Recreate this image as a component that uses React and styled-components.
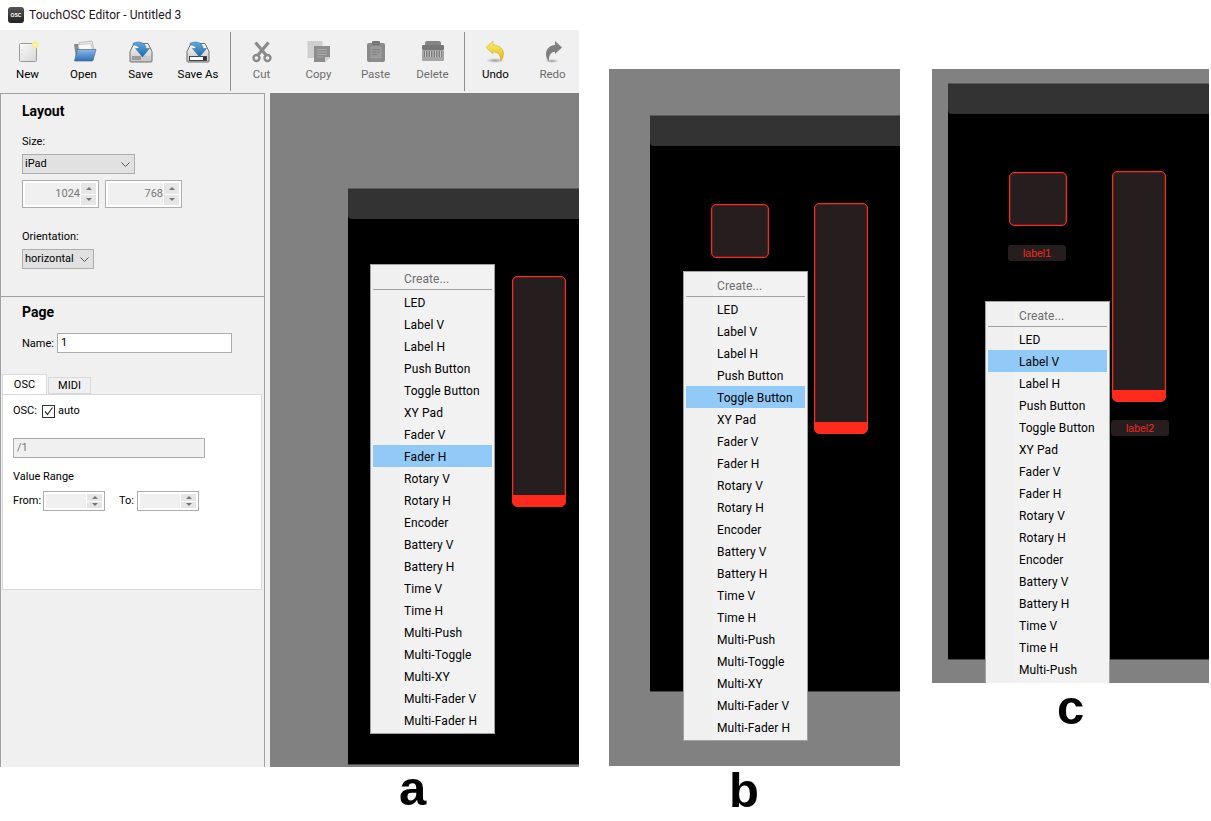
import React from "react";
import styled, { createGlobalStyle } from "styled-components";

const Global = createGlobalStyle`
  html, body { margin: 0; padding: 0; background: #fff; }
  body { font-family: Roboto, "Open Sans", "Liberation Sans", sans-serif; font-size: 12px; color: #000; }
`;

const Figure = styled.div`display: flex; align-items: flex-start; width: 1211px; height: 821px; overflow: hidden;`;
const Column = styled.div`
  flex: none; width: ${p => p.$width}px; margin-left: ${p => p.$left || 0}px; margin-top: ${p => p.$top || 0}px;
`;
const Caption = styled.div`
  font: bold 49px/50px "Liberation Sans", Arial, sans-serif; color: #000;
  padding-left: ${p => p.$indent}px; margin-top: ${p => p.$gap}px;
`;

const Window = styled.div`display: flex; flex-direction: column; height: 767px;`;
const TitleBar = styled.div`display: flex; align-items: center; height: 30px; padding-left: 8px; gap: 5px; background: #fff; color: #1d1320; letter-spacing: .07px;`;
const Logo = styled.div`
  width: 16px; height: 16px; border-radius: 3px; background: linear-gradient(#555, #222); letter-spacing: 0;
  color: #fff; font: bold 5px/16px "Liberation Sans", sans-serif; text-align: center;
`;
const Toolbar = styled.div`display: flex; height: 63px; background: #f0f0f0; font-size: 11.5px;`;
const ToolButton = styled.div`
  flex: none; width: ${p => p.$w || 57}px; display: flex; flex-direction: column; align-items: center; padding-top: 10px;
  color: ${p => p.$off ? "#6d6d6d" : "#000"};
  span { margin-top: 2px; line-height: 16px; white-space: nowrap; }
  svg { display: block; }
`;
const ToolSep = styled.div`flex: none; width: 1px; height: 59px; margin: 2px ${p => p.$r}px 0 ${p => p.$l}px; background: #8f8f8f;`;

const Work = styled.div`flex: 1; display: flex; background: #f0f0f0; min-height: 0;`;
const Side = styled.div`
  flex: none; width: 265px; box-sizing: border-box; border: 1px solid #a0a0a8; border-bottom: 0;
  margin-right: 5px; display: flex; flex-direction: column; font-size: 11px;
`;
const Section = styled.section`
  height: ${p => p.$h}px; flex: none; box-sizing: border-box; padding: ${p => p.$pt}px 0 0 21px;
  border-bottom: ${p => p.$line ? "1px solid #a0a0a0" : "0"};
`;
const Heading = styled.div`font-weight: 700; font-size: 14px; line-height: 16px; color: #000;`;
const FieldLabel = styled.div`line-height: 14px; margin-top: ${p => p.$mt}px;`;
const Combo = styled.div`
  box-sizing: border-box; width: ${p => p.$w}px; height: 20px; margin-top: ${p => p.$mt}px; padding: 0 4px 0 2px;
  display: flex; align-items: center; justify-content: space-between;
  background: #e1e1e1; border: 1px solid #adadad; line-height: 18px;
`;
const SpinRow = styled.div`display: flex; gap: 6px; margin-top: 6px;`;
const Spin = styled.div`
  box-sizing: border-box; width: ${p => p.$w}px; height: ${p => p.$h}px; padding: 2px; flex: none;
  display: flex; border: 1px solid #adadad; background: #fff;
`;
const SpinField = styled.div`flex: 1; background: #f0f0f0; color: #777; text-align: right; line-height: ${p => p.$h - 6}px;`;
const SpinButtons = styled.div`flex: none; width: 15px; margin-left: 1px; display: flex; flex-direction: column; gap: 1px; background: #fff;`;
const SpinButton = styled.div`flex: 1; background: #e6e6e6; display: flex; align-items: center; justify-content: center;
  &::before { content: ""; border-left: 3px solid transparent; border-right: 3px solid transparent;
    ${p => p.$down ? "border-top: 3px solid #777;" : "border-bottom: 3px solid #777;"} }
`;
const NameRow = styled.div`display: flex; align-items: center; margin-top: 13px;`;
const NameLabel = styled.span`flex: none; width: 35px;`;
const TextInput = styled.div`
  box-sizing: border-box; width: ${p => p.$w}px; height: 20px; padding-left: 3px; line-height: 18px;
  border: 1px solid #adadad; background: ${p => p.$off ? "#f0f0f0" : "#fff"}; color: ${p => p.$off ? "#777" : "#000"};
  margin: ${p => p.$m || 0};
`;
const Tabs = styled.div`display: flex; align-items: flex-end; height: 20px; margin: 0 0 0 1px; gap: 1px;`;
const Tab = styled.div`
  box-sizing: border-box; width: ${p => p.$w}px; height: ${p => p.$active ? 20 : 17}px; text-align: center; line-height: 16px;
  background: ${p => p.$active ? "#fff" : "#f0f0f0"}; border: 1px solid #d9d9d9; border-bottom: ${p => p.$active ? 0 : "1px solid #d9d9d9"};
  ${p => p.$active ? "padding-top: 2px;" : ""}
`;
const TabPane = styled.div`
  box-sizing: border-box; margin-left: 1px; width: 260px; height: 196px; padding: 9px 0 0 10px;
  background: #fff; border: 1px solid #d9d9d9;
`;
const Row = styled.div`display: flex; align-items: center; margin-top: ${p => p.$mt || 0}px; line-height: 14px;`;
const Check = styled.span`
  box-sizing: border-box; width: 13px; height: 13px; border: 1px solid #333; background: #fff; margin: 0 3px 0 5px; display: block;
  svg { display: block; }
`;
const Plain = styled.span`flex: none; width: ${p => p.$w}px; margin-left: ${p => p.$l || 0}px;`;

const Canvas = styled.div`
  flex: ${p => p.$fill ? "1" : "none"}; height: ${p => p.$h ? p.$h + "px" : "auto"}; box-sizing: border-box;
  padding: ${p => p.$top}px 0 0 ${p => p.$left}px; background: #818181; overflow: hidden;
`;
const Device = styled.div`
  position: relative; height: 577px; background: #000; box-sizing: border-box; border-top: 1px solid #5a5a5a; border-bottom: 1px solid #4a4a4a; width: 400px;
`;
const DeviceHeader = styled.div`height: 30px; background: #333; border-radius: 0 0 4px 4px;`;
const Control = styled.div`
  position: absolute; left: ${p => p.$x}px; top: ${p => p.$y}px; width: ${p => p.$w}px; height: ${p => p.$h}px;
  box-sizing: border-box; background: #261e1e; border: 1px solid #ff2a1e; border-radius: 5px; overflow: hidden;
  box-shadow: inset 0 0 0 1px rgba(255, 42, 30, .25);
`;
const FaderFill = styled.div`position: absolute; left: -1px; right: -1px; bottom: -1px; height: 12px; background: #ff2a1e;`;
const LabelChip = styled.div`
  position: absolute; left: ${p => p.$x}px; top: ${p => p.$y}px; width: 58px; height: 16px; border-radius: 3px; background: #261e1e;
  color: #f5281e; font: 10.5px/16px "Liberation Sans", sans-serif; text-align: center;
`;
const MenuBox = styled.div`
  position: absolute; left: ${p => p.$x}px; top: ${p => p.$y}px; width: 125px; box-sizing: border-box; padding: 2px 2px ${p => p.$open ? 0 : 2}px;
  background: linear-gradient(90deg, #f0f0f0 28px, #f2f2f2 29px); border: 1px solid #a0a0a0; ${p => p.$open ? "border-bottom: 0;" : ""}
  height: ${p => p.$hgt}px; overflow: hidden; letter-spacing: .1px;
`;
const MenuHead = styled.div`height: 23px; margin-bottom: 1px; padding-left: 31px; line-height: 24px; box-sizing: border-box; color: #6d6d6d; border-bottom: 1px solid #a0a0a0;`;
const MenuItem = styled.div`
  height: 22px; line-height: 24px; padding-left: 31px; white-space: nowrap;
  background: ${p => p.$on ? "#91c9f7" : "transparent"};
`;

const items = ["LED","Label V","Label H","Push Button","Toggle Button","XY Pad","Fader V","Fader H","Rotary V","Rotary H","Encoder","Battery V","Battery H","Time V","Time H","Multi-Push","Multi-Toggle","Multi-XY","Multi-Fader V","Multi-Fader H"];

const Menu = ({ x, y, selected, count = items.length, height = 470, open }) => (
  <MenuBox $x={x} $y={y} $hgt={height} $open={open}>
    <MenuHead>Create...</MenuHead>
    {items.slice(0, count).map(t => <MenuItem key={t} $on={t === selected}>{t}</MenuItem>)}
  </MenuBox>
);

const Screen = ({ square, labels, children }) => (
  <Device>
    <DeviceHeader />
    {square && <Control $x={61} $y={88} $w={58} $h={54} />}
    {labels && <LabelChip $x={60} $y={161}>label1</LabelChip>}
    <Control $x={164} $y={87} $w={54} $h={231}><FaderFill /></Control>
    {labels && <LabelChip $x={163} $y={336}>label2</LabelChip>}
    {children}
  </Device>
);

const Ico = ({ children }) => <svg width="28" height="24" viewBox="0 0 28 24">{children}</svg>;
const Chevron = () => <svg width="9" height="5" viewBox="0 0 9 5"><path d="M.5.5 4.500 4.500 8.500.5" fill="none" stroke="#555" /></svg>;

const Defs = () => (
  <svg width="0" height="0" style={{ position: "absolute" }}>
    <defs>
      <linearGradient id="pg" x1="0" y1="0" x2="1" y2="1"><stop offset="0" stopColor="#fdfdfd" /><stop offset="1" stopColor="#d5d5d5" /></linearGradient>
      <linearGradient id="bl" x1="0" y1="0" x2="0" y2="1"><stop offset="0" stopColor="#8db8e8" /><stop offset="1" stopColor="#2f6db5" /></linearGradient>
      <linearGradient id="ar" x1="0" y1="0" x2="0" y2="1"><stop offset="0" stopColor="#62a8dc" /><stop offset="1" stopColor="#1d6aa8" /></linearGradient>
      <linearGradient id="tr" x1="0" y1="0" x2="0" y2="1"><stop offset="0" stopColor="#fafafa" /><stop offset="1" stopColor="#c4c4c4" /></linearGradient>
      <linearGradient id="yl" x1="0" y1="0" x2="0" y2="1"><stop offset="0" stopColor="#fbee7a" /><stop offset="1" stopColor="#e0b80e" /></linearGradient>
      <radialGradient id="sh"><stop offset="0" stopColor="#777" stopOpacity=".7" /><stop offset="1" stopColor="#777" stopOpacity="0" /></radialGradient>
    </defs>
  </svg>
);

const NewIcon = () => <Ico>
  <rect x="5.5" y="3.5" width="17" height="18" rx="1" fill="url(#pg)" stroke="#9a9a9a" />
  <circle cx="8" cy="10" r=".6" fill="#aaa" /><circle cx="8" cy="14" r=".6" fill="#aaa" />
  <circle cx="21" cy="5" r="3.4" fill="#f6ee8a" /><circle cx="21" cy="5" r="1.8" fill="#fbf6c0" />
</Ico>;
const OpenIcon = () => <Ico>
  <path d="M4 4h5l1 2h6v12H6z" fill="#8b8b8b" />
  <path d="M9 2.5 22 1l2 8-13 2z" fill="#e6e6e6" stroke="#a5a5a5" strokeWidth=".6" />
  <path d="M8 4.8 21 3.6l2 8-13 2z" fill="#f8f8f8" stroke="#b5b5b5" strokeWidth=".6" />
  <path d="M7.5 9.5H26l-3 10.8a1 1 0 0 1-1 .7H4.500z" fill="url(#bl)" stroke="#3f6d9e" strokeWidth=".7" />
</Ico>;
const TrayPaths = () => <path d="M7 3.500h14l4 8V21a1 1 0 0 1-1 1H4a1 1 0 0 1-1-1v-9.500z" fill="url(#tr)" stroke="#6f6f6f" />;
const Arrow = () => <path d="M6 3.300C12 .5 19 2.500 19 8.500h3.500L15.500 17 8.500 8.500H12C12 6.500 9.500 5 6 5z" fill="url(#ar)" stroke="#2d6c9c" strokeWidth=".5" />;
const SaveIcon = () => <Ico><TrayPaths />
  <rect x="5" y="16" width="18" height="4" fill="#9c9c9c" /><rect x="14" y="16" width="9" height="4" fill="#c9c9c9" />
  <Arrow />
</Ico>;
const SaveAsIcon = () => <Ico><TrayPaths />
  <rect x="5.500" y="16.500" width="17" height="4" fill="#fafafa" stroke="#444" /><rect x="19" y="17" width="3" height="3" fill="#333" />
  <Arrow />
</Ico>;
const CutIcon = () => <Ico>
  <g stroke="#8b8b8b" fill="none"><path d="M7.500 2.500 18 15M20.500 2.500 10 15" strokeWidth="3.200" />
    <circle cx="8.500" cy="18" r="3" strokeWidth="2.400" /><circle cx="19.500" cy="18" r="3" strokeWidth="2.400" /></g>
</Ico>;
const CopyIcon = () => <Ico>
  <rect x="2.500" y="1" width="15" height="17" fill="#cfcfcf" />
  <path d="M9 6h16v11l-5 5H9z" fill="#8d8d8d" />
  <path d="M25 17h-5v5z" fill="#d2d2d2" />
  <path d="M12 9.500h10M12 12h10M12 14.500h10M12 17h6" stroke="#aaa" />
</Ico>;
const PasteIcon = () => <Ico>
  <rect x="5" y="3" width="18" height="19" rx="2" fill="#8a8a8a" />
  <rect x="10" y="1" width="8" height="4" rx="1" fill="#777" />
  <rect x="8.500" y="6.500" width="11" height="12" fill="#9c9c9c" />
  <path d="M10 9.500h8M10 12h8M10 14.500h5" stroke="#7f7f7f" />
</Ico>;
const DeleteIcon = () => <Ico>
  <path d="M6 6V3a2 2 0 0 1 2-2h12a2 2 0 0 1 2 2v3z" fill="#858585" />
  <rect x="3" y="5" width="22" height="5" rx="1" fill="#777" />
  <rect x="3" y="10" width="22" height="11" rx="1" fill="#a5a5a5" />
  <rect x="5" y="11" width="18" height="6" fill="#7c7c7c" />
  <path d="M6.500 11v6M9 11v6M11.500 11v6M14 11v6M16.500 11v6M19 11v6M21.500 11v6" stroke="#c8c8c8" />
</Ico>;
const UndoIcon = () => <Ico>
  <ellipse cx="13" cy="20.500" rx="9" ry="2.500" fill="url(#sh)" />
  <path d="M4 7.500 11 1v4C17 5 21.500 8.500 21.500 13.500c0 3-1 5.500-3 7.500.6-4.500-1.500-9-7.500-9.200V14z" fill="url(#yl)" stroke="#c9a410" strokeWidth=".5" />
</Ico>;
const RedoIcon = () => <Ico>
  <ellipse cx="13" cy="21" rx="7" ry="2" fill="url(#sh)" />
  <path d="M23 7.500 16 1v4C11 5 7 9 7 14c0 3 1 6 3 7.500-.4-4.500 1-9.500 6-9.700V14z" fill="#808080" />
</Ico>;

const Tool = ({ icon: I, label, off, w }) => <ToolButton $off={off} $w={w}><I /><span>{label}</span></ToolButton>;
const Spinner = ({ w, h, value }) => (
  <Spin $w={w} $h={h}>
    <SpinField $h={h}>{value}</SpinField>
    <SpinButtons><SpinButton /><SpinButton $down /></SpinButtons>
  </Spin>
);

export default function App() {
  return (
    <>
      <Global />
      <Defs />
      <Figure>
        <Column $width={579}>
          <Window>
            <TitleBar><Logo>OSC</Logo><span>TouchOSC Editor - Untitled 3</span></TitleBar>
            <Toolbar>
              <Tool icon={NewIcon} label="New" w={55} />
              <Tool icon={OpenIcon} label="Open" />
              <Tool icon={SaveIcon} label="Save" />
              <Tool icon={SaveAsIcon} label="Save As" w={58} />
              <ToolSep $l={3} $r={2} />
              <Tool icon={CutIcon} label="Cut" off />
              <Tool icon={CopyIcon} label="Copy" off />
              <Tool icon={PasteIcon} label="Paste" off />
              <Tool icon={DeleteIcon} label="Delete" off />
              <ToolSep $l={3} $r={2} />
              <Tool icon={UndoIcon} label="Undo" />
              <Tool icon={RedoIcon} label="Redo" off />
            </Toolbar>
            <Work>
              <Side>
                <Section $h={203} $pt={9} $line>
                  <Heading>Layout</Heading>
                  <FieldLabel $mt={16}>Size:</FieldLabel>
                  <Combo $w={113} $mt={5}><span>iPad</span><Chevron /></Combo>
                  <SpinRow><Spinner w={77} h={28} value="1024" /><Spinner w={77} h={28} value="768" /></SpinRow>
                  <FieldLabel $mt={22}>Orientation:</FieldLabel>
                  <Combo $w={72} $mt={5}><span>horizontal</span><Chevron /></Combo>
                </Section>
                <Section $h={77} $pt={7}>
                  <Heading>Page</Heading>
                  <NameRow><NameLabel>Name:</NameLabel><TextInput $w={175}>1</TextInput></NameRow>
                </Section>
                <Tabs><Tab $w={45} $active>OSC</Tab><Tab $w={43}>MIDI</Tab></Tabs>
                <TabPane>
                  <Row><span>OSC:</span><Check><svg width="11" height="11" viewBox="0 0 11 11"><path d="M2 5.500 4.500 8.500 9.500 1.500" fill="none" stroke="#333" strokeWidth="1.200" /></svg></Check><span>auto</span></Row>
                  <TextInput $off $w={192} $m="20px 0 0 0">/1</TextInput>
                  <Row $mt={12}><span>Value Range</span></Row>
                  <Row $mt={7}>
                    <Plain $w={30}>From:</Plain><Spinner w={62} h={20} value="" />
                    <Plain $l={14} $w={18}>To:</Plain><Spinner w={62} h={20} value="" />
                  </Row>
                </TabPane>
              </Side>
              <Canvas $fill $top={95} $left={78}>
                <Screen><Menu x={22} y={75} selected="Fader H" /></Screen>
              </Canvas>
            </Work>
          </Window>
          <Caption $indent={399} $gap={-4}>a</Caption>
        </Column>
        <Column $width={291} $left={30} $top={69}>
          <Canvas $h={697} $top={46} $left={41}>
            <Screen square><Menu x={33} y={155} selected="Toggle Button" /></Screen>
          </Canvas>
          <Caption $indent={120} $gap={-1}>b</Caption>
        </Column>
        <Column $width={277} $left={32} $top={69}>
          <Canvas $h={614} $top={14} $left={16}>
            <Screen square labels><Menu x={37} y={217} selected="Label V" count={16} height={382} open /></Screen>
          </Canvas>
          <Caption $indent={125} $gap={-1}>c</Caption>
        </Column>
      </Figure>
    </>
  );
}
